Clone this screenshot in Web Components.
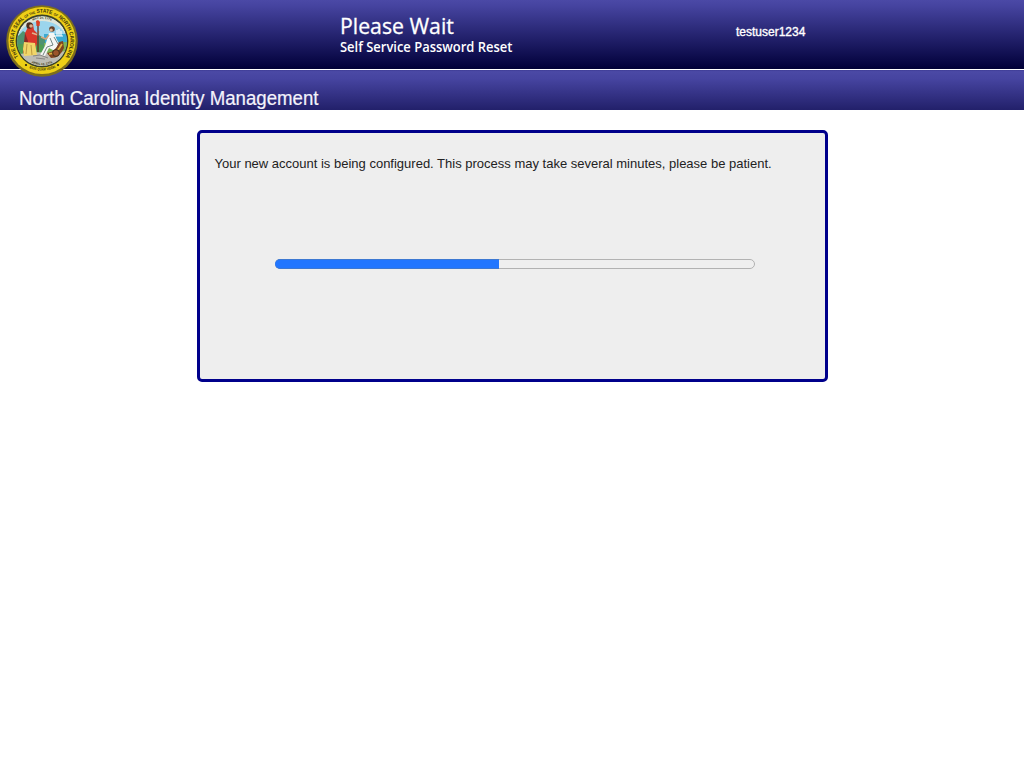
<!DOCTYPE html>
<html lang="en">
<head>
<meta charset="utf-8">
<title>Please Wait</title>
<style>
html, body { margin: 0; background: #fff; font-family: "Liberation Sans", Arial, sans-serif; }
</style>
</head>
<body>
<wait-page></wait-page>
<script>
const define = (name, html) => {
  const template = document.createElement('template');
  template.innerHTML = html;
  customElements.define(name, class extends HTMLElement {
    constructor() {
      super();
      this.attachShadow({ mode: 'open' }).append(template.content.cloneNode(true));
    }
  });
};

define('state-seal', `
<style>
:host { display: block; width: 72px; height: 72px; }
svg { display: block; }
text { font-family: "Liberation Sans", sans-serif; font-weight: bold; fill: #3a330b; }
</style>
<svg width="72" height="72" viewBox="0 0 72 72">
  <defs>
    <path id="top" d="M13.1 52.6A28.3 28.3 0 1 1 58.9 52.6"/>
    <path id="bottom" d="M20.8 61.8A32 32 0 0 0 51.2 61.8"/>
    <path id="date" d="M18 22.8A22.4 22.4 0 0 1 54 22.8"/>
    <path id="lower" d="M25 57.5A24.3 24.3 0 0 0 47 57.5"/>
    <clipPath id="scene"><circle cx="36" cy="36" r="25"/></clipPath>
  </defs>
  <circle cx="36" cy="36" r="35.8" fill="#7d6e1c"/>
  <circle cx="36" cy="35.5" r="33.6" fill="#edcf16"/>
  <circle cx="36" cy="36" r="26.4" fill="#3b4228"/>
  <g clip-path="url(#scene)">
    <circle cx="36" cy="36" r="25" fill="#dfe5da"/>
    <path d="M12 30Q20 16 36 16T60 30V36H12Z" fill="#9bd5ed"/>
    <path d="M38 29H62V40H38Z" fill="#3baad2"/>
    <path d="M10 33L17 26L23 30L30 28L39 34V45H10Z" fill="#4d9270"/>
    <path d="M10 40Q25 36 37 40L38 52H10Z" fill="#4f9e50"/>
    <path d="M38 38L62 37V52H38Z" fill="#7cb354"/>
    <path d="M14 49Q28 46 43 48L61 46L53 62H20Z" fill="#bdbcb4"/>
    <path d="M51 25V31M48 31H57M53 24V31M55 26V31" stroke="#f8fbfb" stroke-width="1.2" fill="none"/>
    <path d="M22 22Q23 17 27 19L28 25L31 28L31 39L26 50L17 48L19 37L19 28Z" fill="#d8372b"/>
    <path d="M19 28L17 47L20 49L22 36Z" fill="#8b2926"/>
    <path d="M18 37L29 38L31 50L18 51L17 44Z" fill="#f0d668"/>
    <path d="M21 39L20 49M25 40L26 50" stroke="#b48a35" stroke-width=".8"/>
    <circle cx="23.5" cy="20.5" r="3.2" fill="#4c2d20"/>
    <circle cx="25" cy="21" r="1.8" fill="#e0ad87"/>
    <path d="M26 28L32 30L33 26" fill="none" stroke="#e2b38e" stroke-width="1.6"/>
    <path d="M32 17V47" stroke="#62341f" stroke-width="1.3"/>
    <path d="M30 16L32 15L34 17L33.5 21H30.5Z" fill="#dc3f25"/>
    <circle cx="46" cy="24" r="2.8" fill="#65412b"/>
    <circle cx="45.2" cy="25" r="1.6" fill="#e1b38d"/>
    <path d="M43 28L48 28L51 35L54 40L49 46L43 43L39 51L34 50L39 41Z" fill="#f5f7f4"/>
    <path d="M43 30L40 34L35 32" fill="none" stroke="#d5a47a" stroke-width="1.5"/>
    <path d="M44 33L47 40L41 42L37 50M48 32L52 39" fill="none" stroke="#516765" stroke-width=".8"/>
    <path d="M41 48Q49 48 53 37L57 36L58 43Q54 53 45 53Z" fill="#80431f"/>
    <path d="M43 49Q51 49 56 39" fill="none" stroke="#dfb13c" stroke-width="1.7"/>
    <circle cx="50" cy="48" r="3.4" fill="#9b5429" stroke="#3e3019"/>
    <path d="M27 51L34 50L42 53M30 53L39 54" stroke="#777" stroke-width=".8" fill="none"/>
  </g>
  <text font-size="5.5" textLength="122" lengthAdjust="spacingAndGlyphs"><textPath href="#top" startOffset="1">THE GREAT SEAL <tspan font-size="3.5">OF THE</tspan> STATE <tspan font-size="3.5">OF</tspan> NORTH CAROLINA</textPath></text>
  <text font-size="3.6" textLength="27" lengthAdjust="spacingAndGlyphs"><textPath href="#bottom" startOffset="2.8">ESSE QUAM VIDERI</textPath></text>
  <text font-size="3" font-weight="400"><textPath href="#date" startOffset="50%" text-anchor="middle">MAY 20, 1775</textPath></text>
  <text font-size="3"><textPath href="#lower" startOffset="50%" text-anchor="middle">APRIL 12, 1776</textPath></text>
  <circle cx="20" cy="60" r="1.1" fill="#28210a"/><circle cx="52" cy="60" r="1.1" fill="#28210a"/>
</svg>`);

define('site-header', `
<style>
:host { display: block; position: relative; color: #fff; }
.top { display: grid; grid-template-columns: 340px 396px 1fr; height: 69px; background: linear-gradient(#4b49a6, #4644a0 8%, #03023d 96%, #000035); border-bottom: 1px solid #fff; box-sizing: content-box; }
.titles { grid-column: 2; padding-top: 12px; font-family: "Open Sans", "Noto Sans", sans-serif; }
.title, .sub { display: block; width: max-content; transform-origin: left center; }
.title { font-size: 22px; line-height: 27px; font-weight: 500; transform: scaleX(.966); -webkit-text-stroke: .3px #fff; }
.sub { font-size: 14px; line-height: 15px; font-weight: 600; transform: scaleX(.925); }
.user { grid-column: 3; padding-top: 24px; font-size: 12px; line-height: 16px; -webkit-text-stroke: .35px #fff; }
.brand { height: 40px; box-sizing: border-box; padding: 16px 0 0 19px; background: linear-gradient(#3f3d96, #4b49a5 4%, #4644a0 22%, #22206a); font-size: 20px; line-height: 24px; color: #f4f3fb; }
.brand span { display: block; width: max-content; transform: scaleX(.932); transform-origin: left center; -webkit-text-stroke: .2px #f4f3fb; }
.brand slot { transform: none; }
::slotted(*) { display: inline; }
state-seal { position: absolute; left: 6px; top: 5px; }
</style>
<div class="top">
  <div class="titles"><span class="title"><slot name="title"></slot></span><span class="sub"><slot name="sub"></slot></span></div>
  <div class="user"><slot name="user"></slot></div>
</div>
<div class="brand"><span><slot name="brand"></slot></span></div>
<state-seal></state-seal>`);

define('progress-bar', `
<style>
:host { display: block; box-sizing: border-box; width: 480px; height: 10px; border: 1px solid #b2b2b2; border-radius: 5px; background: #efefef; }
.fill { width: 224px; height: 10px; margin: -1px 0 0 -1px; background: #2176ff; border-radius: 5px 0 0 5px; box-sizing: border-box; border: solid #3c78d2; border-width: 1px 0; }
</style>
<div class="fill"></div>`);

define('message-panel', `
<style>
:host { display: block; box-sizing: border-box; width: 631px; height: 252px; margin: 20px 0 0 197px; padding: 22px 15px 0 14.5px; border: 3px solid #00008b; border-radius: 5px; background: #eee; color: #222; }
.message { font-size: 13px; line-height: 17px; white-space: nowrap; }
.bar { padding: 87px 0 0 60.5px; }
</style>
<div class="message"><slot></slot></div>
<div class="bar"><slot name="progress"></slot></div>`);

define('wait-page', `
<style>:host { display: block; height: 768px; overflow: hidden; }</style>
<site-header>
  <span slot="title">Please Wait</span>
  <span slot="sub">Self Service Password Reset</span>
  <span slot="user">testuser1234</span>
  <span slot="brand">North Carolina Identity Management</span>
</site-header>
<message-panel>Your new account is being configured. This process may take several minutes, please be patient.<progress-bar slot="progress"></progress-bar></message-panel>`);
</script>
</body>
</html>
